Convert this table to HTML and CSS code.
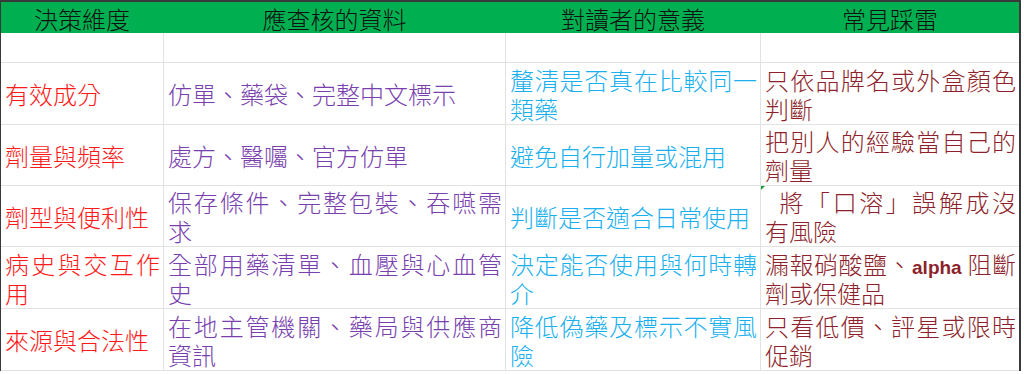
FILE: index.html
```html
<!DOCTYPE html>
<html lang="zh-Hant">
<head>
<meta charset="utf-8">
<title>決策維度</title>
<link rel="stylesheet" href="styles.css">
</head>
<body>
<table class="sheet">
  <colgroup>
    <col class="c1"><col class="c2"><col class="c3"><col class="c4">
  </colgroup>
  <thead>
    <tr class="head">
      <th>決策維度</th>
      <th>應查核的資料</th>
      <th>對讀者的意義</th>
      <th>常見踩雷</th>
    </tr>
  </thead>
  <tbody>
    <tr class="blank"><td></td><td></td><td></td><td></td></tr>
    <tr class="r1">
      <td class="dim">有效成分</td>
      <td class="data">仿單、藥袋、完整中文標示</td>
      <td class="mean">釐清是否真在比較同一類藥</td>
      <td class="trap">只依品牌名或外盒顏色判斷</td>
    </tr>
    <tr class="r2">
      <td class="dim">劑量與頻率</td>
      <td class="data">處方、醫囑、官方仿單</td>
      <td class="mean">避免自行加量或混用</td>
      <td class="trap">把別人的經驗當自己的劑量</td>
    </tr>
    <tr class="r3">
      <td class="dim">劑型與便利性</td>
      <td class="data">保存條件、完整包裝、吞嚥需求</td>
      <td class="mean">判斷是否適合日常使用</td>
      <td class="trap flag">&ensp;將「口溶」誤解成沒有風險</td>
    </tr>
    <tr class="r4">
      <td class="dim">病史與交互作用</td>
      <td class="data">全部用藥清單、血壓與心血管史</td>
      <td class="mean">決定能否使用與何時轉介</td>
      <td class="trap">漏報硝酸鹽、<span class="latin">alpha</span> 阻斷劑或保健品</td>
    </tr>
    <tr class="r5">
      <td class="dim">來源與合法性</td>
      <td class="data">在地主管機關、藥局與供應商資訊</td>
      <td class="mean">降低偽藥及標示不實風險</td>
      <td class="trap">只看低價、評星或限時促銷</td>
    </tr>
  </tbody>
</table>
</body>
</html>
```
FILE: styles.css
```css
html, body {
  margin: 0;
  padding: 0;
  background: #ffffff;
  overflow: hidden;
}

body {
  font-family: "Noto Sans CJK TC", "Noto Sans CJK SC", sans-serif;
  font-size: 24px;
  font-weight: 300;
}

.sheet {
  border-collapse: separate;
  border-spacing: 0;
  table-layout: fixed;
  width: 1021px;
  border-top: 2px solid #3a3a3a;
  border-left: 1px solid #3a3a3a;
  border-right: 2px solid #3a3a3a;
}

.c1 { width: 163px; }
.c2 { width: 342px; }
.c3 { width: 255px; }
.c4 { width: 258px; }

th, td {
  box-sizing: border-box;
  padding: 0 3px 0 4px;
  border-right: 1px solid #e2e2e2;
  border-bottom: 1px solid #e2e2e2;
  vertical-align: middle;
  line-height: 29px;
  text-align: justify;
  position: relative;
}

td:last-child, th:last-child {
  border-right: 0;
}

.head th {
  background: #00b050;
  border-right-color: #00b050;
  border-bottom: 0;
  height: 31px;
  line-height: 28px;
  padding: 3px 0 0;
  font-weight: 300;
  color: #111111;
  text-align: center;
}

.blank td { height: 30px; }
.r1 td { height: 62px; }
.r2 td { height: 61px; }
.r3 td { height: 61px; }
.r4 td { height: 62px; }
.r5 td { height: 62px; }

.dim { color: #ff1a1a; }
.data { color: #7a3fae; }
.mean { color: #1ab0ee; }
.trap { color: #8e1f2c; }

.latin {
  font-family: "Liberation Sans", Arial, sans-serif;
  font-weight: 700;
  font-size: 19px;
  line-height: 1;
}

.flag::before {
  content: "";
  position: absolute;
  left: 0;
  top: 0;
  width: 0;
  height: 0;
  border-top: 4px solid #1f9a3a;
  border-right: 4px solid transparent;
}
```
